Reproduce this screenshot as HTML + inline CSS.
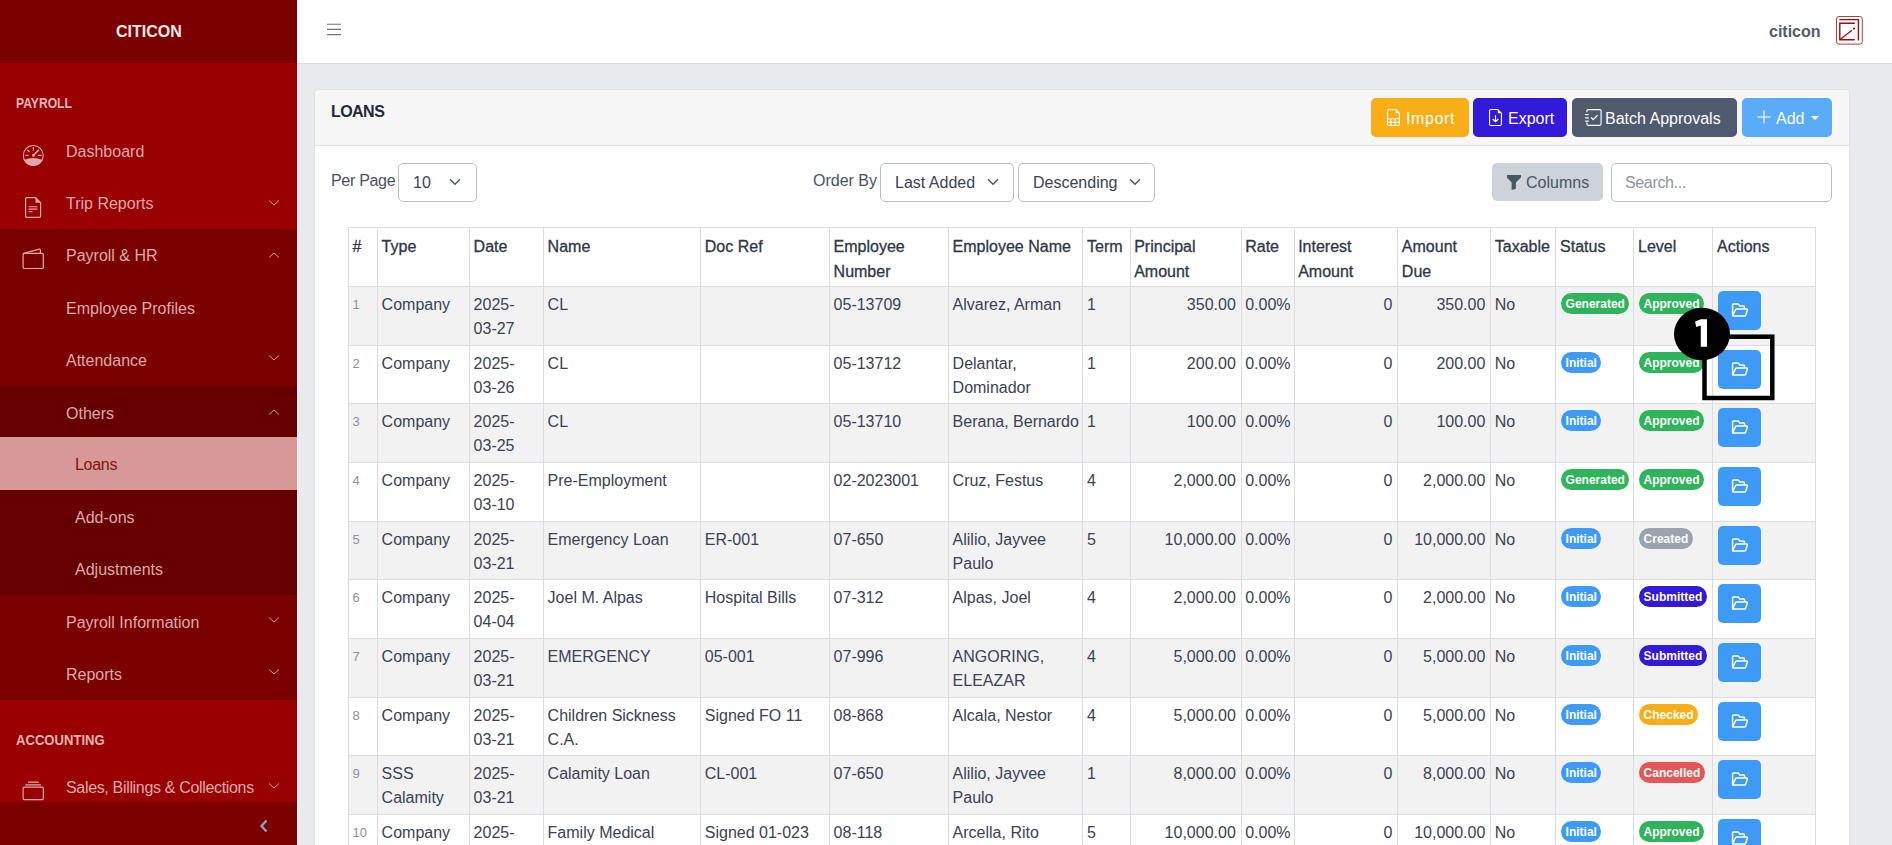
<!DOCTYPE html><html><head><meta charset="utf-8"><style>
*{box-sizing:border-box;margin:0;padding:0}
html,body{width:1892px;height:845px;overflow:hidden;background:#e9eaed;font-family:"Liberation Sans",sans-serif;font-size:16px;color:#3b4252}
.abs{position:absolute}
#sb{position:absolute;left:0;top:0;width:297px;height:845px;background:#990000;overflow:hidden}
.blk{position:absolute;left:0;width:297px}
.st{position:absolute;white-space:nowrap;color:#dca9ab;font-size:16px;line-height:20px;left:66px;margin-top:1px}
.sec{position:absolute;left:16px;font-weight:bold;font-size:14px;color:#e3b5b5;line-height:16px;transform:scaleX(.9);transform-origin:0 0}
svg{position:absolute;overflow:visible}
#top{position:absolute;left:297px;top:0;width:1595px;height:64px;background:#fff;border-bottom:1px solid #d9dce2}
#card{position:absolute;left:314px;top:89px;width:1536px;height:800px;background:#fff;border:1px solid #dfe1e6;border-radius:5px}
#chead{position:absolute;left:0;top:0;width:1534px;height:56px;background:#f7f7f7;border-bottom:1px solid #dcdfe4;border-radius:5px 5px 0 0}
.btn{position:absolute;height:39px;border-radius:5px;color:#fff;font-size:16px;line-height:39px;white-space:nowrap}
.btn span{position:absolute;top:0.5px}
.sel{position:absolute;height:39px;border:1px solid #b9bfc9;border-radius:5px;background:#fff;font-size:16px;color:#3b4252;white-space:nowrap}
.sel span{position:absolute;top:9px;line-height:20px}
.lbl{position:absolute;font-size:16px;color:#4a5261;white-space:nowrap;line-height:20px}
#tbl{position:absolute;left:348px;top:227px;width:1467.2px;border-collapse:collapse;table-layout:fixed;background:#fff}
#tbl td,#tbl th{border:1px solid #dcdde3;padding:6px 4.8px 3.675px 3.6px;vertical-align:top;line-height:24px;white-space:nowrap;text-align:left;font-size:16px;color:#3b4252;overflow:visible}
#tbl th{padding-top:6px;padding-bottom:2px;line-height:25px;font-weight:normal;color:#2f3745;-webkit-text-stroke:0.3px #2f3745}
#tbl tr.o td{background:#f2f2f3}
#tbl td.n{font-size:13px;color:#8c919b}
#tbl td.r{text-align:right}
.bd{display:inline-block;height:21px;line-height:22.5px;border-radius:11px;padding:0 4px;font-size:12px;font-weight:bold;color:#fff;vertical-align:top;margin-top:0;margin-left:1px;padding:0 4.5px}
.ab{display:block;width:43px;height:39px;background:#3d9bf7;border-radius:5px;position:relative;margin-top:-1.9px;margin-left:0.6px}
</style></head><body>
<div id="sb"><div class="blk" style="top:0;height:63px;background:#7b0000"></div>
<div class="abs" style="left:116px;top:22px;font-weight:bold;font-size:16px;color:#f6eaea;line-height:20px">CITICON</div>
<div class="sec" style="top:94.5px;transform:scaleX(.865)">PAYROLL</div>
<svg style="left:22px;top:144px" width="23" height="23" viewBox="0 0 23 23">
<circle cx="11.25" cy="11.45" r="9.95" fill="none" stroke="#dfa9a9" stroke-width="1.1"/>
<path d="M1.9 15.9 Q11.25 12.3 20.6 15.9 A10.4 10.4 0 0 1 1.9 15.9Z" fill="#dfa9a9"/>
<path d="M11.3 11.4 L16.6 6.1" stroke="#dfa9a9" stroke-width="1.5" stroke-linecap="round"/>
<circle cx="11.4" cy="11.4" r="1.4" fill="#dfa9a9"/>
<path d="M11.3 3.3 V6.6 M5.4 5.8 L7.5 7.7 M3.3 11.4 H6.6 M15.9 11.4 H19.6" stroke="#dfa9a9" stroke-width="1.2"/>
</svg>
<div class="st" style="top:141px">Dashboard</div>
<svg style="left:25px;top:197px" width="17" height="21" viewBox="0 0 17 21">
<path d="M1.8 0.6 H10.5 L15.6 5.7 V19 Q15.6 20.3 14.3 20.3 H1.8 Q0.6 20.3 0.6 19 V1.9 Q0.6 0.6 1.8 0.6Z" fill="none" stroke="#dfa9a9" stroke-width="1.2"/>
<path d="M10.5 0.6 V5.7 H15.6Z" fill="#dfa9a9"/>
<path d="M3.6 9.7 H12.4 M3.6 12.1 H12.4 M3.6 14.7 H7.6" stroke="#dfa9a9" stroke-width="1.1"/>
</svg>
<div class="st" style="top:193.4px">Trip Reports</div>
<svg style="left:268px;top:199px" width="12" height="8" viewBox="0 0 12 8"><path d="M1 1.5 L6 6 L11 1.5" fill="none" stroke="#d99a9c" stroke-width="1"/></svg>
<div class="blk" style="top:229px;height:157px;background:#7b0000"></div>
<svg style="left:22px;top:248px" width="23" height="22" viewBox="0 0 23 22">
<rect x="1.1" y="5.3" width="20.2" height="15.2" rx="1.3" fill="none" stroke="#dfa9a9" stroke-width="1.2"/>
<path d="M1.5 5.3 L17.3 1.2 Q18.4 1 18.4 2.2 V5.3" fill="none" stroke="#dfa9a9" stroke-width="1.2"/>
</svg>
<div class="st" style="top:245px">Payroll &amp; HR</div>
<svg style="left:268px;top:251px" width="12" height="8" viewBox="0 0 12 8"><path d="M1 6.5 L6 2 L11 6.5" fill="none" stroke="#d99a9c" stroke-width="1"/></svg>
<div class="st" style="top:298px">Employee Profiles</div>
<div class="st" style="top:350px">Attendance</div>
<svg style="left:268px;top:354px" width="12" height="8" viewBox="0 0 12 8"><path d="M1 1.5 L6 6 L11 1.5" fill="none" stroke="#d99a9c" stroke-width="1"/></svg>
<div class="blk" style="top:386px;height:209px;background:#660000"></div>
<div class="st" style="top:403px">Others</div>
<svg style="left:268px;top:408px" width="12" height="8" viewBox="0 0 12 8"><path d="M1 6.5 L6 2 L11 6.5" fill="none" stroke="#d99a9c" stroke-width="1"/></svg>
<div class="blk" style="top:437px;height:52.5px;background:#d99898"></div>
<div class="st" style="top:454px;left:75px;color:#7d1414;letter-spacing:-0.3px">Loans</div>
<div class="st" style="top:507px;left:75px">Add-ons</div>
<div class="st" style="top:559px;left:75px">Adjustments</div>
<div class="blk" style="top:595px;height:105px;background:#7b0000"></div>
<div class="st" style="top:612px">Payroll Information</div>
<svg style="left:268px;top:616px" width="12" height="8" viewBox="0 0 12 8"><path d="M1 1.5 L6 6 L11 1.5" fill="none" stroke="#d99a9c" stroke-width="1"/></svg>
<div class="st" style="top:664px">Reports</div>
<svg style="left:268px;top:668px" width="12" height="8" viewBox="0 0 12 8"><path d="M1 1.5 L6 6 L11 1.5" fill="none" stroke="#d99a9c" stroke-width="1"/></svg>
<div class="sec" style="top:731.5px;transform:scaleX(.935)">ACCOUNTING</div>
<svg style="left:22px;top:781px" width="23" height="20" viewBox="0 0 23 20">
<rect x="1.1" y="6.1" width="20.2" height="12.6" rx="1.3" fill="none" stroke="#dfa9a9" stroke-width="1.2"/>
<path d="M6 1.1 H16.8 M3.3 3.9 H19" stroke="#dfa9a9" stroke-width="1.3"/>
</svg>
<div class="st" style="top:777px;letter-spacing:-0.33px">Sales, Billings &amp; Collections</div>
<svg style="left:268px;top:782px" width="12" height="8" viewBox="0 0 12 8"><path d="M1 1.5 L6 6 L11 1.5" fill="none" stroke="#d99a9c" stroke-width="1"/></svg>
<div class="blk" style="top:802px;height:43px;background:#7b0000"></div>
<svg style="left:259px;top:819px" width="10" height="14" viewBox="0 0 10 14"><path d="M7.5 1.5 L2.5 7 L7.5 12.5" fill="none" stroke="#8fa0b8" stroke-width="2.4"/></svg></div>
<div class="abs" style="left:297px;top:64px;width:1px;height:781px;background:#eef2f6"></div>
<div id="top"><svg style="left:29px;top:23px" width="16" height="13" viewBox="0 0 16 13"><path d="M1 1.2 H15 M1 6.4 H15 M1 11.6 H15" stroke="#6b7280" stroke-width="1.1"/></svg>
<div class="abs" style="left:1472px;top:22px;font-weight:bold;font-size:16px;color:#525b6b;line-height:20px">citicon</div>
<svg style="left:1539px;top:16px" width="27" height="29" viewBox="0 0 27 29">
<rect x="0.5" y="0.5" width="25.8" height="27.6" rx="2.5" fill="none" stroke="#b04040" stroke-width="1"/>
<path d="M3.3 3.6 H22.4 V24.6" fill="none" stroke="#9b0d0d" stroke-width="1.4"/>
<path d="M18.8 7.3 H3.8 V23.8 H18.8" fill="none" stroke="#9b0d0d" stroke-width="1.4"/>
<path d="M4 23.4 L16 14.2" stroke="#9b0d0d" stroke-width="1.2"/>
<circle cx="18" cy="12.6" r="1.1" fill="#9b0d0d"/>
</svg></div>
<div id="card"><div id="chead"></div>
<div class="abs" style="left:16px;top:12px;font-weight:bold;font-size:16px;color:#1f2937;line-height:20px;letter-spacing:-0.55px">LOANS</div>
<div class="btn" style="left:1056px;top:8px;width:98px;background:#f9ae17"><svg style="left:15.5px;top:11px" width="14" height="18" viewBox="0 0 14 18"><path d="M1.7 0.55 H8.8 L12.4 4.2 V15.3 Q12.4 16.45 11.25 16.45 H1.7 Q0.55 16.45 0.55 15.3 V1.7 Q0.55 0.55 1.7 0.55Z" fill="none" stroke="#fff" stroke-width="1.1"/><path d="M8.8 0.55 V4.2 H12.4Z" fill="#fff"/><path d="M0.55 9.7 H12.4 M0.55 13.2 H12.4 M3.9 9.7 V16.45 M8.25 9.7 V16.45" stroke="#fff" stroke-width="1.1"/></svg><span style="left:35px"><span style="position:static;letter-spacing:0.6px">Import</span></span></div>
<div class="btn" style="left:1158px;top:8px;width:94px;background:#3319d9"><svg style="left:15.5px;top:11px" width="14" height="18" viewBox="0 0 14 18"><path d="M1.7 0.55 H8.8 L12.4 4.2 V15.3 Q12.4 16.45 11.25 16.45 H1.7 Q0.55 16.45 0.55 15.3 V1.7 Q0.55 0.55 1.7 0.55Z" fill="none" stroke="#fff" stroke-width="1.1"/><path d="M8.8 0.55 V4.2 H12.4Z" fill="#fff"/><path d="M6.5 6.3 V12.3 M3.6 10 L6.5 12.7 L9.4 10" fill="none" stroke="#fff" stroke-width="1.2"/></svg><span style="left:35px">Export</span></div>
<div class="btn" style="left:1257px;top:8px;width:165px;background:#4e5a6e"><svg style="left:12px;top:10px" width="20" height="20" viewBox="0 0 20 20"><path d="M2.9 4.3 V2.8 Q2.9 1.6 4.1 1.6 H15.9 Q17.1 1.6 17.1 2.8 V16.1 Q17.1 17.3 15.9 17.3 H4.1 Q2.9 17.3 2.9 16.1 V14.6" fill="none" stroke="#fff" stroke-width="1.15"/><path d="M1.6 6.6 H4.3 M1.6 9.9 H4.3 M1.6 13.1 H4.3" stroke="#fff" stroke-width="1.4" stroke-linecap="round"/><path d="M7.1 9.4 L9.1 11.6 L13.6 7.3" fill="none" stroke="#fff" stroke-width="1.2"/></svg><span style="left:33px">Batch Approvals</span></div>
<div class="btn" style="left:1427px;top:8px;width:90px;background:#5aacf9"><svg style="left:15px;top:12px" width="14" height="14" viewBox="0 0 14 14"><path d="M7 0.5 V13.5 M0.5 7 H13.5" stroke="#fff" stroke-width="1.15"/></svg><svg style="left:69px;top:18px" width="8" height="4" viewBox="0 0 8 4"><path d="M0 0 H8 L4 4Z" fill="#fff"/></svg><span style="left:34px">Add</span></div>
<div class="lbl" style="left:16px;top:80.5px;letter-spacing:-0.3px">Per Page</div>
<div class="sel" style="left:83px;top:73px;width:79px"><span style="left:14px">10</span><svg style="left:50px;top:14px" width="12" height="8" viewBox="0 0 12 8"><path d="M1 1.3 L6 6.3 L11 1.3" fill="none" stroke="#4b5563" stroke-width="1.35"/></svg></div>
<div class="lbl" style="left:498px;top:80.5px">Order By</div>
<div class="sel" style="left:565px;top:73px;width:134px"><span style="left:14px">Last Added</span><svg style="left:106px;top:14px" width="12" height="8" viewBox="0 0 12 8"><path d="M1 1.3 L6 6.3 L11 1.3" fill="none" stroke="#4b5563" stroke-width="1.35"/></svg></div>
<div class="sel" style="left:703px;top:73px;width:137px"><span style="left:14px">Descending</span><svg style="left:110px;top:14px" width="12" height="8" viewBox="0 0 12 8"><path d="M1 1.3 L6 6.3 L11 1.3" fill="none" stroke="#4b5563" stroke-width="1.35"/></svg></div>
<div class="btn" style="left:1177px;top:73px;width:111px;height:38px;background:#ced2d9;color:#4b5563;line-height:38px">
<svg style="left:14px;top:12px" width="16" height="16" viewBox="0 0 16 16"><path d="M1 0 H15 V2.6 L9.9 7.6 V13.7 L5.6 14.9 V7.6 L1 2.6 Z" fill="#4b5568"/></svg><span style="left:34px">Columns</span></div>
<div class="sel" style="left:1296px;top:73px;width:221px;border-color:#b9bfc9"><span style="left:13px;color:#8e95a2;letter-spacing:-0.35px">Search...</span></div></div>
<table id="tbl"><colgroup><col style="width:29px"><col style="width:92px"><col style="width:74px"><col style="width:157.2px"><col style="width:128.8px"><col style="width:119px"><col style="width:134.5px"><col style="width:47.1px"><col style="width:111.0px"><col style="width:53.0px"><col style="width:103.7px"><col style="width:92.9px"><col style="width:65.3px"><col style="width:78.0px"><col style="width:79.0px"><col style="width:102.7px"></colgroup>
<tr><th>#</th><th>Type</th><th>Date</th><th>Name</th><th>Doc Ref</th><th>Employee<br>Number</th><th>Employee Name</th><th>Term</th><th>Principal<br>Amount</th><th>Rate</th><th>Interest<br>Amount</th><th>Amount<br>Due</th><th>Taxable</th><th>Status</th><th>Level</th><th>Actions</th></tr>
<tr class="o"><td class="n">1</td><td>Company</td><td>2025-<br>03-27</td><td>CL</td><td></td><td>05-13709</td><td>Alvarez, Arman</td><td>1</td><td class="r">350.00</td><td>0.00%</td><td class="r">0</td><td class="r">350.00</td><td>No</td><td><span class="bd" style="background:#2eb55b">Generated</span></td><td><span class="bd" style="background:#2eb55b">Approved</span></td><td><span class="ab"><svg style="left:0;top:0" width="43" height="39" viewBox="0 0 43 39"><path d="M14.6 25 V13.7 Q14.6 12.9 15.4 12.9 H20.2 L21.8 15 H25.7 Q26.5 15 26.5 15.8 V17.6 M14.6 25 L17.5 18.6 Q17.8 17.9 18.5 17.9 H28.8 Q29.6 17.9 29.4 18.7 L27.7 24.3 Q27.5 25 26.8 25 Z" fill="none" stroke="#fff" stroke-width="1.45" stroke-linejoin="round"/></svg></span></td></tr>
<tr><td class="n">2</td><td>Company</td><td>2025-<br>03-26</td><td>CL</td><td></td><td>05-13712</td><td>Delantar,<br>Dominador</td><td>1</td><td class="r">200.00</td><td>0.00%</td><td class="r">0</td><td class="r">200.00</td><td>No</td><td><span class="bd" style="background:#3d9bf7">Initial</span></td><td><span class="bd" style="background:#2eb55b">Approved</span></td><td><span class="ab"><svg style="left:0;top:0" width="43" height="39" viewBox="0 0 43 39"><path d="M14.6 25 V13.7 Q14.6 12.9 15.4 12.9 H20.2 L21.8 15 H25.7 Q26.5 15 26.5 15.8 V17.6 M14.6 25 L17.5 18.6 Q17.8 17.9 18.5 17.9 H28.8 Q29.6 17.9 29.4 18.7 L27.7 24.3 Q27.5 25 26.8 25 Z" fill="none" stroke="#fff" stroke-width="1.45" stroke-linejoin="round"/></svg></span></td></tr>
<tr class="o"><td class="n">3</td><td>Company</td><td>2025-<br>03-25</td><td>CL</td><td></td><td>05-13710</td><td>Berana, Bernardo</td><td>1</td><td class="r">100.00</td><td>0.00%</td><td class="r">0</td><td class="r">100.00</td><td>No</td><td><span class="bd" style="background:#3d9bf7">Initial</span></td><td><span class="bd" style="background:#2eb55b">Approved</span></td><td><span class="ab"><svg style="left:0;top:0" width="43" height="39" viewBox="0 0 43 39"><path d="M14.6 25 V13.7 Q14.6 12.9 15.4 12.9 H20.2 L21.8 15 H25.7 Q26.5 15 26.5 15.8 V17.6 M14.6 25 L17.5 18.6 Q17.8 17.9 18.5 17.9 H28.8 Q29.6 17.9 29.4 18.7 L27.7 24.3 Q27.5 25 26.8 25 Z" fill="none" stroke="#fff" stroke-width="1.45" stroke-linejoin="round"/></svg></span></td></tr>
<tr><td class="n">4</td><td>Company</td><td>2025-<br>03-10</td><td>Pre-Employment</td><td></td><td>02-2023001</td><td>Cruz, Festus</td><td>4</td><td class="r">2,000.00</td><td>0.00%</td><td class="r">0</td><td class="r">2,000.00</td><td>No</td><td><span class="bd" style="background:#2eb55b">Generated</span></td><td><span class="bd" style="background:#2eb55b">Approved</span></td><td><span class="ab"><svg style="left:0;top:0" width="43" height="39" viewBox="0 0 43 39"><path d="M14.6 25 V13.7 Q14.6 12.9 15.4 12.9 H20.2 L21.8 15 H25.7 Q26.5 15 26.5 15.8 V17.6 M14.6 25 L17.5 18.6 Q17.8 17.9 18.5 17.9 H28.8 Q29.6 17.9 29.4 18.7 L27.7 24.3 Q27.5 25 26.8 25 Z" fill="none" stroke="#fff" stroke-width="1.45" stroke-linejoin="round"/></svg></span></td></tr>
<tr class="o"><td class="n">5</td><td>Company</td><td>2025-<br>03-21</td><td>Emergency Loan</td><td>ER-001</td><td>07-650</td><td>Alilio, Jayvee<br>Paulo</td><td>5</td><td class="r">10,000.00</td><td>0.00%</td><td class="r">0</td><td class="r">10,000.00</td><td>No</td><td><span class="bd" style="background:#3d9bf7">Initial</span></td><td><span class="bd" style="background:#9ca3af">Created</span></td><td><span class="ab"><svg style="left:0;top:0" width="43" height="39" viewBox="0 0 43 39"><path d="M14.6 25 V13.7 Q14.6 12.9 15.4 12.9 H20.2 L21.8 15 H25.7 Q26.5 15 26.5 15.8 V17.6 M14.6 25 L17.5 18.6 Q17.8 17.9 18.5 17.9 H28.8 Q29.6 17.9 29.4 18.7 L27.7 24.3 Q27.5 25 26.8 25 Z" fill="none" stroke="#fff" stroke-width="1.45" stroke-linejoin="round"/></svg></span></td></tr>
<tr><td class="n">6</td><td>Company</td><td>2025-<br>04-04</td><td>Joel M. Alpas</td><td>Hospital Bills</td><td>07-312</td><td>Alpas, Joel</td><td>4</td><td class="r">2,000.00</td><td>0.00%</td><td class="r">0</td><td class="r">2,000.00</td><td>No</td><td><span class="bd" style="background:#3d9bf7">Initial</span></td><td><span class="bd" style="background:#3319d9">Submitted</span></td><td><span class="ab"><svg style="left:0;top:0" width="43" height="39" viewBox="0 0 43 39"><path d="M14.6 25 V13.7 Q14.6 12.9 15.4 12.9 H20.2 L21.8 15 H25.7 Q26.5 15 26.5 15.8 V17.6 M14.6 25 L17.5 18.6 Q17.8 17.9 18.5 17.9 H28.8 Q29.6 17.9 29.4 18.7 L27.7 24.3 Q27.5 25 26.8 25 Z" fill="none" stroke="#fff" stroke-width="1.45" stroke-linejoin="round"/></svg></span></td></tr>
<tr class="o"><td class="n">7</td><td>Company</td><td>2025-<br>03-21</td><td>EMERGENCY</td><td>05-001</td><td>07-996</td><td>ANGORING,<br>ELEAZAR</td><td>4</td><td class="r">5,000.00</td><td>0.00%</td><td class="r">0</td><td class="r">5,000.00</td><td>No</td><td><span class="bd" style="background:#3d9bf7">Initial</span></td><td><span class="bd" style="background:#3319d9">Submitted</span></td><td><span class="ab"><svg style="left:0;top:0" width="43" height="39" viewBox="0 0 43 39"><path d="M14.6 25 V13.7 Q14.6 12.9 15.4 12.9 H20.2 L21.8 15 H25.7 Q26.5 15 26.5 15.8 V17.6 M14.6 25 L17.5 18.6 Q17.8 17.9 18.5 17.9 H28.8 Q29.6 17.9 29.4 18.7 L27.7 24.3 Q27.5 25 26.8 25 Z" fill="none" stroke="#fff" stroke-width="1.45" stroke-linejoin="round"/></svg></span></td></tr>
<tr><td class="n">8</td><td>Company</td><td>2025-<br>03-21</td><td>Children Sickness<br>C.A.</td><td>Signed FO 11</td><td>08-868</td><td>Alcala, Nestor</td><td>4</td><td class="r">5,000.00</td><td>0.00%</td><td class="r">0</td><td class="r">5,000.00</td><td>No</td><td><span class="bd" style="background:#3d9bf7">Initial</span></td><td><span class="bd" style="background:#f9ae17">Checked</span></td><td><span class="ab"><svg style="left:0;top:0" width="43" height="39" viewBox="0 0 43 39"><path d="M14.6 25 V13.7 Q14.6 12.9 15.4 12.9 H20.2 L21.8 15 H25.7 Q26.5 15 26.5 15.8 V17.6 M14.6 25 L17.5 18.6 Q17.8 17.9 18.5 17.9 H28.8 Q29.6 17.9 29.4 18.7 L27.7 24.3 Q27.5 25 26.8 25 Z" fill="none" stroke="#fff" stroke-width="1.45" stroke-linejoin="round"/></svg></span></td></tr>
<tr class="o"><td class="n">9</td><td>SSS<br>Calamity</td><td>2025-<br>03-21</td><td>Calamity Loan</td><td>CL-001</td><td>07-650</td><td>Alilio, Jayvee<br>Paulo</td><td>1</td><td class="r">8,000.00</td><td>0.00%</td><td class="r">0</td><td class="r">8,000.00</td><td>No</td><td><span class="bd" style="background:#3d9bf7">Initial</span></td><td><span class="bd" style="background:#e55757">Cancelled</span></td><td><span class="ab"><svg style="left:0;top:0" width="43" height="39" viewBox="0 0 43 39"><path d="M14.6 25 V13.7 Q14.6 12.9 15.4 12.9 H20.2 L21.8 15 H25.7 Q26.5 15 26.5 15.8 V17.6 M14.6 25 L17.5 18.6 Q17.8 17.9 18.5 17.9 H28.8 Q29.6 17.9 29.4 18.7 L27.7 24.3 Q27.5 25 26.8 25 Z" fill="none" stroke="#fff" stroke-width="1.45" stroke-linejoin="round"/></svg></span></td></tr>
<tr><td class="n">10</td><td>Company</td><td>2025-<br>03-21</td><td>Family Medical<br>Assistance</td><td>Signed 01-023</td><td>08-118</td><td>Arcella, Rito</td><td>5</td><td class="r">10,000.00</td><td>0.00%</td><td class="r">0</td><td class="r">10,000.00</td><td>No</td><td><span class="bd" style="background:#3d9bf7">Initial</span></td><td><span class="bd" style="background:#2eb55b">Approved</span></td><td><span class="ab"><svg style="left:0;top:0" width="43" height="39" viewBox="0 0 43 39"><path d="M14.6 25 V13.7 Q14.6 12.9 15.4 12.9 H20.2 L21.8 15 H25.7 Q26.5 15 26.5 15.8 V17.6 M14.6 25 L17.5 18.6 Q17.8 17.9 18.5 17.9 H28.8 Q29.6 17.9 29.4 18.7 L27.7 24.3 Q27.5 25 26.8 25 Z" fill="none" stroke="#fff" stroke-width="1.45" stroke-linejoin="round"/></svg></span></td></tr>
</table>
<svg style="left:0;top:0" width="1892" height="845" viewBox="0 0 1892 845">
<rect x="1704.5" y="336.7" width="67.8" height="61.3" fill="none" stroke="#000" stroke-width="4.5"/>
<ellipse cx="1702" cy="334" rx="28" ry="26.2" fill="#000"/>
</svg>
<svg style="left:0;top:0" width="1892" height="845" viewBox="0 0 1892 845"><path d="M1700.8 319.3 H1707 V346.8 H1700.8 V325.4 L1696.2 326.9 L1695.1 321.5 Z" fill="#fff"/></svg>
</body></html>
